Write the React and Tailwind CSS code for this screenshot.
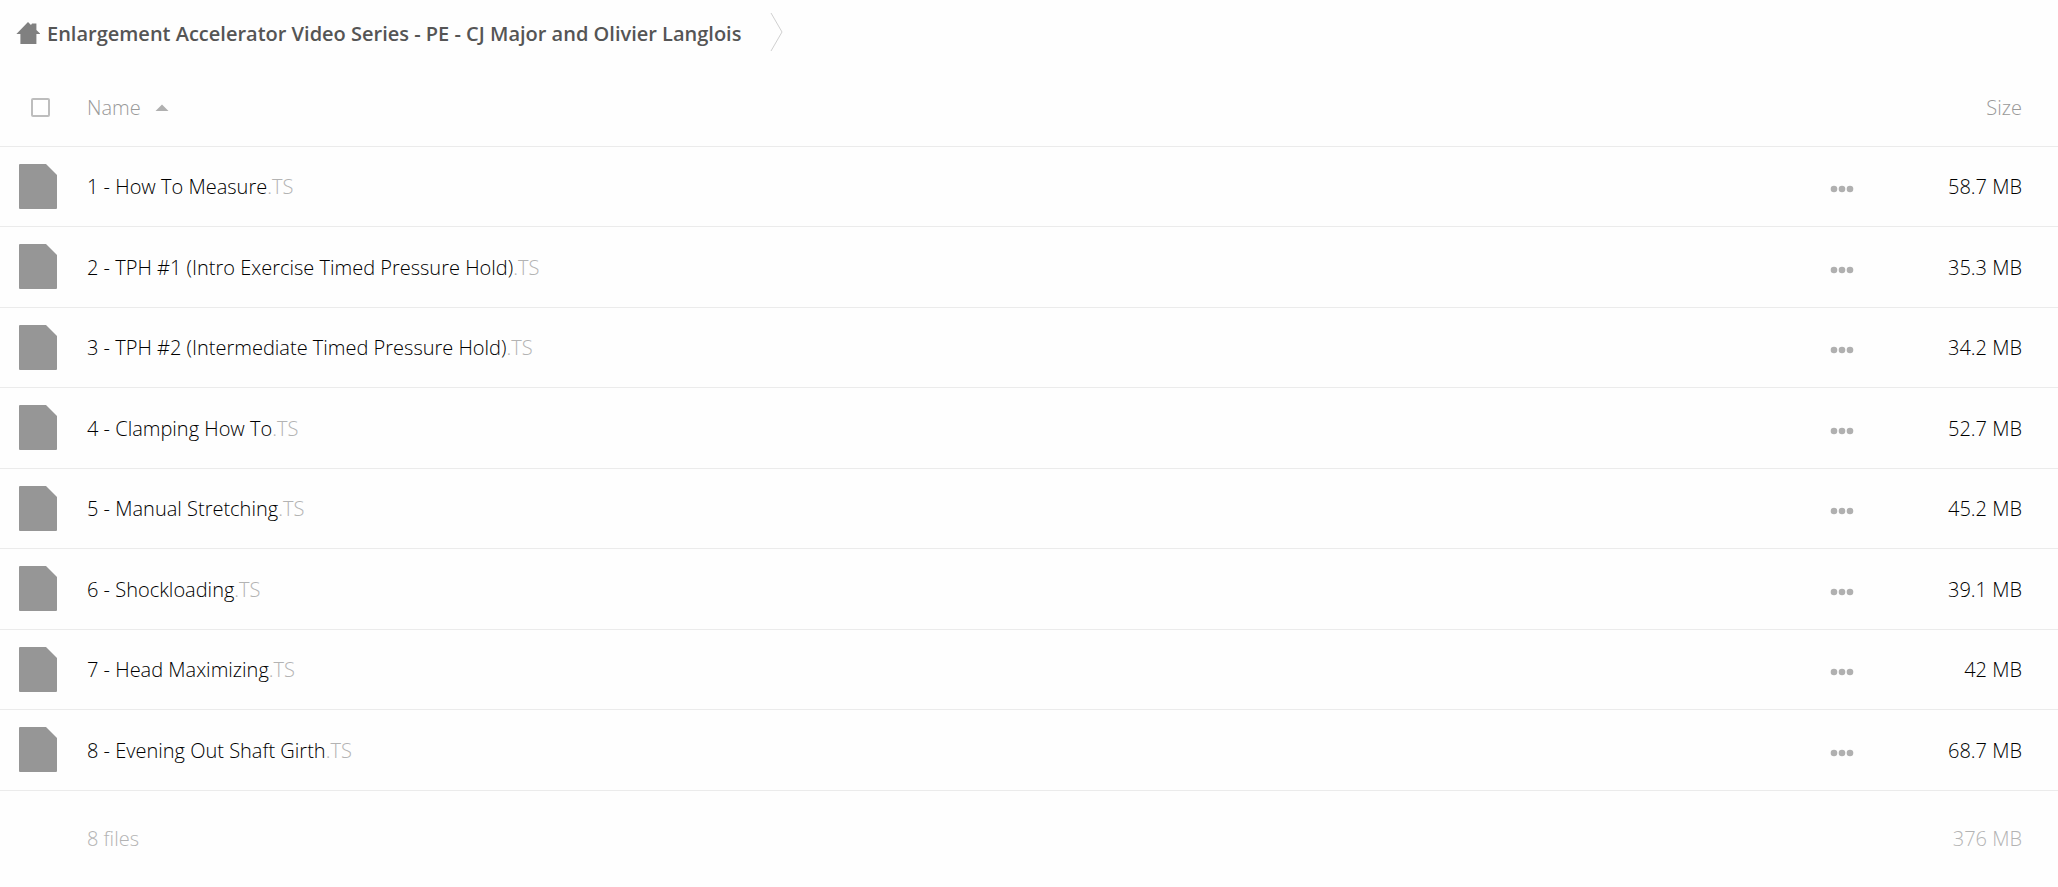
import React from "react";

const files = [
  { name: "1 - How To Measure", size: "58.7 MB" },
  { name: "2 - TPH #1 (Intro Exercise Timed Pressure Hold)", size: "35.3 MB" },
  { name: "3 - TPH #2 (Intermediate Timed Pressure Hold)", size: "34.2 MB" },
  { name: "4 - Clamping How To", size: "52.7 MB" },
  { name: "5 - Manual Stretching", size: "45.2 MB" },
  { name: "6 - Shockloading", size: "39.1 MB" },
  { name: "7 - Head Maximizing", size: "42 MB" },
  { name: "8 - Evening Out Shaft Girth", size: "68.7 MB" },
];

const HomeIcon = () => (
  <svg width="24" height="24" viewBox="0 0 24 24" fill="#808080" aria-hidden="true">
    <path d="M12 0 L15 3 L16 1.4 H20.4 V8 L24.4 12 H20.4 V22 H4.4 V12 H0.4 Z" />
  </svg>
);

const FileIcon = () => (
  <svg className="block" width="38" height="45" viewBox="0 0 38 45" fill="#969696" aria-hidden="true">
    <path d="M1 0 H27 L38 11 V44 Q38 45 37 45 H1 Q0 45 0 44 V1 Q0 0 1 0 Z" />
  </svg>
);

const Breadcrumb = () => (
  <nav className="flex h-[70px] items-start pl-4 pt-3">
    <a href="#" className="flex h-11 items-center gap-[7px] text-xl font-semibold text-[#555]">
      <HomeIcon />
      <span>Enlargement Accelerator Video Series - PE - CJ Major and Olivier Langlois</span>
    </a>
    <svg className="ml-7" width="14" height="40" viewBox="0 0 14 40" fill="none" stroke="#d0d0d0" aria-hidden="true">
      <path d="M2 1 L13 20 L2 39" />
    </svg>
  </nav>
);

const FileRow = ({ name, size }) => (
  <tr className="border-b border-[#ebebeb] odd:h-20 even:h-[81px]">
    <td className="pl-[19px]">
      <FileIcon />
    </td>
    <td className="pt-0.5">
      <a href="#" className="text-black">
        {name}
        <span className="text-[#b3b3b3]">.TS</span>
      </a>
    </td>
    <td className="pt-0.5">
      <button type="button" aria-label={`Actions for ${name}`} className="flex p-2 pt-3">
        <svg width="24" height="8" viewBox="0 0 24 8" fill="#b0b0b0" aria-hidden="true">
          <circle cx="4" cy="4" r="3.3" />
          <circle cx="12" cy="4" r="3.3" />
          <circle cx="20" cy="4" r="3.3" />
        </svg>
      </button>
    </td>
    <td className="pr-9 pt-0.5 text-right">{size}</td>
  </tr>
);

const App = () => (
  <div className="min-h-screen bg-[#fefefe] font-['Open_Sans',sans-serif]">
    <Breadcrumb />
    <table className="w-full table-fixed border-collapse text-left text-xl font-light text-black">
      <colgroup>
        <col className="w-[87px]" />
        <col />
        <col className="w-[98px]" />
        <col className="w-[138px]" />
      </colgroup>
      <thead>
        <tr className="h-[76px] border-b border-[#ebebeb] text-[#999]">
          <th className="pl-[31px] font-light">
            <input
              type="checkbox"
              aria-label="Select all files"
              className="block size-[19px] appearance-none rounded-xs border-2 border-[#bdbdbd]"
            />
          </th>
          <th className="font-light" aria-sort="ascending">
            <button type="button" className="flex items-center gap-[14px]">
              Name
              <svg width="14" height="7" viewBox="0 0 14 7" fill="#b0b0b0" aria-hidden="true">
                <path d="M0.5 7 L7 0.5 L13.5 7 Z" />
              </svg>
            </button>
          </th>
          <th />
          <th className="pr-9 text-right font-light">Size</th>
        </tr>
      </thead>
      <tbody>
        {files.map((file) => (
          <FileRow key={file.name} {...file} />
        ))}
      </tbody>
      <tfoot>
        <tr className="h-24 text-[#b3b3b3]">
          <td />
          <td className="pt-0.5">8 files</td>
          <td />
          <td className="pr-9 pt-0.5 text-right">376 MB</td>
        </tr>
      </tfoot>
    </table>
  </div>
);

export default App;
